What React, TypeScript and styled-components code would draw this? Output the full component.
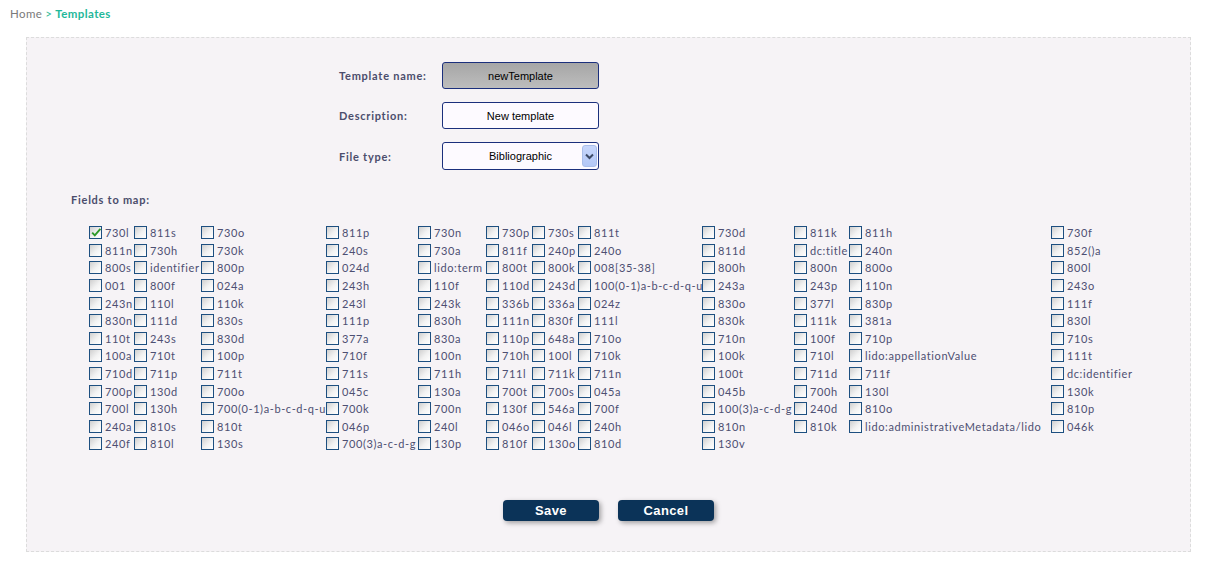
import React from "react";
import styled, { createGlobalStyle } from "styled-components";

const GlobalStyle = createGlobalStyle`
  html, body { margin: 0; padding: 0; background: #ffffff; }
  body { font-family: Lato, "Open Sans", sans-serif; }
`;

const Page = styled.div`
  padding: 7px 17px 16px 10px;
  width: 1208px;
  box-sizing: border-box;
`;

const Breadcrumb = styled.div`
  font-family: Lato, sans-serif;
  font-size: 11.5px;
  line-height: 14px;
  height: 14px;
  color: #7a7a7a;
  letter-spacing: 0.4px;
`;

const Crumb = styled.span<{ $active?: boolean }>`
  color: ${(p) => (p.$active ? "#1fb89a" : "#7a7a7a")};
  font-weight: ${(p) => (p.$active ? 700 : 400)};
`;

const Sep = styled.span`
  color: #33bb99;
  margin: 0 3px;
`;

const Panel = styled.div`
  margin: 16px 0 0 16px;
  width: 1165px;
  height: 515px;
  box-sizing: border-box;
  background: #f6f3f6;
  border: 1px dashed #dcdcdc;
  padding: 24px 0 0 0;
  display: flex;
  flex-direction: column;
`;

const Form = styled.div`
  display: grid;
  grid-template-columns: 103px 157px;
  row-gap: 13px;
  padding-left: 312px;
  align-items: center;
`;

const Label = styled.label`
  font-family: Lato, sans-serif;
  font-weight: 700;
  font-size: 11px;
  letter-spacing: 0.75px;
  color: #4b4d6c;
`;

const TextInput = styled.div<{ $disabled?: boolean }>`
  height: 27px;
  box-sizing: border-box;
  border: 1px solid #1b2f7c;
  border-radius: 3px;
  background: ${(p) =>
    p.$disabled
      ? "linear-gradient(to bottom, #a6a6a6 0%, #bdbdbd 100%)"
      : "#fdfaff"};
  font-family: "Liberation Sans", Arial, sans-serif;
  font-size: 11px;
  color: #000;
  display: flex;
  align-items: center;
  justify-content: center;
`;

const SelectBox = styled.div`
  height: 28px;
  box-sizing: border-box;
  border: 1px solid #1b2f7c;
  border-radius: 3px;
  background: #fdfaff;
  font-family: "Liberation Sans", Arial, sans-serif;
  font-size: 11px;
  color: #000;
  display: flex;
  align-items: center;
  padding: 0 1px 0 0;
`;

const SelectText = styled.span`
  flex: 1;
  text-align: center;
  padding-left: 16px;
`;

const ArrowButton = styled.span`
  width: 15px;
  height: 22px;
  border-radius: 3px;
  background: linear-gradient(to bottom, #c7d6fb 0%, #b3c7f6 100%);
  border: 1px solid #a9bde9;
  box-sizing: border-box;
  display: flex;
  align-items: center;
  justify-content: center;
`;

const FieldsTitle = styled.div`
  font-family: Lato, sans-serif;
  font-weight: 700;
  font-size: 11px;
  letter-spacing: 0.75px;
  color: #4b4d6c;
  margin: 23px 0 0 44px;
`;

const FieldGrid = styled.div`
  display: grid;
  grid-template-columns: 45px 67px 125px 92px 68px 46px 46px 124px 92px 55px 202px auto;
  grid-auto-rows: 17.6px;
  margin: 18px 0 0 62px;
`;

const Cell = styled.div`
  display: flex;
  align-items: center;
  white-space: nowrap;
`;

const Box = styled.span`
  width: 13px;
  height: 13px;
  box-sizing: border-box;
  border: 1px solid #1d4f80;
  background: linear-gradient(135deg, #cfcfcf 0%, #f2f2f2 55%, #ffffff 100%);
  margin-right: 3px;
  flex: none;
  position: relative;
`;

const Check = styled.svg`
  position: absolute;
  left: 0;
  top: -1px;
`;

const FieldName = styled.span`
  font-family: Lato, sans-serif;
  font-size: 11px;
  letter-spacing: 0.6px;
  color: #4d4f72;
`;

const Buttons = styled.div`
  margin-top: auto;
  margin-bottom: 30px;
  display: flex;
  justify-content: center;
  gap: 19px;
`;

const Button = styled.button`
  width: 96px;
  height: 21px;
  border: none;
  border-radius: 4px;
  background: #0b3358;
  color: #ffffff;
  font-family: "Liberation Sans", Arial, sans-serif;
  font-weight: 700;
  font-size: 13px;
  letter-spacing: 0.4px;
  box-shadow: 2px 2px 5px rgba(0, 0, 0, 0.35);
  padding: 0;
  cursor: pointer;
`;

const rows: string[][] = [
  ["730l", "811s", "730o", "811p", "730n", "730p", "730s", "811t", "730d", "811k", "811h", "730f"],
  ["811n", "730h", "730k", "240s", "730a", "811f", "240p", "240o", "811d", "dc:title", "240n", "852()a"],
  ["800s", "identifier", "800p", "024d", "lido:term", "800t", "800k", "008[35-38]", "800h", "800n", "800o", "800l"],
  ["001", "800f", "024a", "243h", "110f", "110d", "243d", "100(0-1)a-b-c-d-q-u", "243a", "243p", "110n", "243o"],
  ["243n", "110l", "110k", "243l", "243k", "336b", "336a", "024z", "830o", "377l", "830p", "111f"],
  ["830n", "111d", "830s", "111p", "830h", "111n", "830f", "111l", "830k", "111k", "381a", "830l"],
  ["110t", "243s", "830d", "377a", "830a", "110p", "648a", "710o", "710n", "100f", "710p", "710s"],
  ["100a", "710t", "100p", "710f", "100n", "710h", "100l", "710k", "100k", "710l", "lido:appellationValue", "111t"],
  ["710d", "711p", "711t", "711s", "711h", "711l", "711k", "711n", "100t", "711d", "711f", "dc:identifier"],
  ["700p", "130d", "700o", "045c", "130a", "700t", "700s", "045a", "045b", "700h", "130l", "130k"],
  ["700l", "130h", "700(0-1)a-b-c-d-q-u", "700k", "700n", "130f", "546a", "700f", "100(3)a-c-d-g", "240d", "810o", "810p"],
  ["240a", "810s", "810t", "046p", "240l", "046o", "046l", "240h", "810n", "810k", "lido:administrativeMetadata/lido", "046k"],
  ["240f", "810l", "130s", "700(3)a-c-d-g", "130p", "810f", "130o", "810d", "130v", "", "", ""],
];

function Field({ name, checked }: { name: string; checked?: boolean }) {
  if (!name) return <Cell />;
  return (
    <Cell>
      <Box>
        {checked && (
          <Check width="13" height="13" viewBox="0 0 13 13">
            <path d="M2.2 6.6 L4.8 9.4 L10.4 2.8" fill="none" stroke="#2f9a2a" strokeWidth="1.9" />
          </Check>
        )}
      </Box>
      <FieldName>{name}</FieldName>
    </Cell>
  );
}

export default function App() {
  return (
    <>
      <GlobalStyle />
      <Page>
        <Breadcrumb>
          <Crumb>Home</Crumb>
          <Sep>&gt;</Sep>
          <Crumb $active>Templates</Crumb>
        </Breadcrumb>
        <Panel>
          <Form>
            <Label>Template name:</Label>
            <TextInput $disabled>newTemplate</TextInput>
            <Label>Description:</Label>
            <TextInput>New template</TextInput>
            <Label>File type:</Label>
            <SelectBox>
              <SelectText>Bibliographic</SelectText>
              <ArrowButton>
                <svg width="9" height="7" viewBox="0 0 9 7">
                  <path d="M1 1.5 L4.5 5 L8 1.5" fill="none" stroke="#3d4a66" strokeWidth="2" />
                </svg>
              </ArrowButton>
            </SelectBox>
          </Form>
          <FieldsTitle>Fields to map:</FieldsTitle>
          <FieldGrid>
            {rows.map((row, r) =>
              row.map((name, c) => (
                <Field key={`${r}-${c}`} name={name} checked={r === 0 && c === 0} />
              ))
            )}
          </FieldGrid>
          <Buttons>
            <Button>Save</Button>
            <Button>Cancel</Button>
          </Buttons>
        </Panel>
      </Page>
    </>
  );
}
